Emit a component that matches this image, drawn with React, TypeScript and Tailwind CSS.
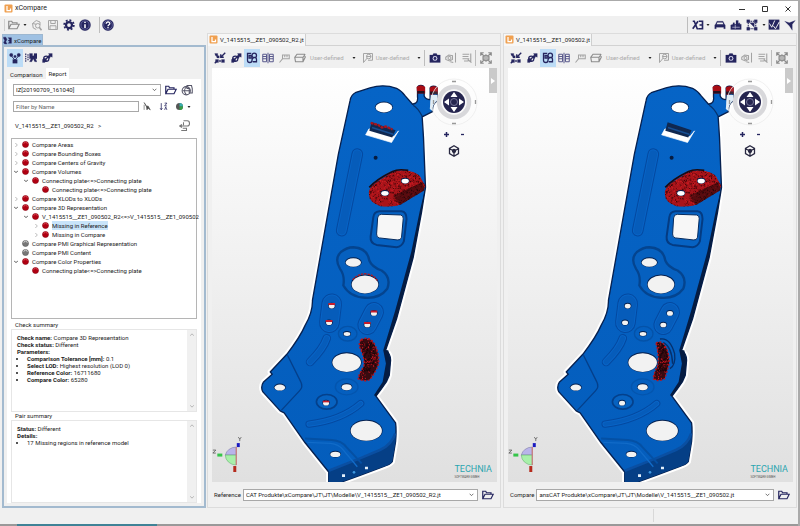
import React, { useId } from "react";

const NAVY = "#25255f";
const GREY = "#a3a3a3";

type IconProps = { name: string; color?: string; className?: string };

const glyphs: Record<string, React.ReactNode> = {
  folder: <path d="M1 13V3h4l1 2h6v2M1 13l3-6h11l-3 6z" fill="none" strokeWidth="1.6" />,
  boxLens: (
    <g fill="none" strokeWidth="1.3">
      <path d="M2 6l5-4 5 2v4M2 6l1 6 4 2M2 6l5 1" />
      <circle cx="9" cy="9" r="3" />
      <path d="M11 11l3 4" strokeWidth="2" />
    </g>
  ),
  save: <path d="M2 2h12v12H2zM5 2v4h6V2M4 14V9h8v5" fill="none" strokeWidth="1.3" />,
  gear: (
    <g fill="none">
      <circle cx="8" cy="8" r="4" strokeWidth="3" />
      <circle cx="8" cy="8" r="6.4" strokeWidth="2.4" strokeDasharray="2.5 2.5" />
    </g>
  ),
  info: (
    <g>
      <circle cx="8" cy="8" r="7.500" />
      <circle cx="8" cy="8" r="5.4" fill="none" stroke="#7d7db5" strokeWidth=".8" />
      <path d="M8 7v5M8 3.6v1.6" stroke="#fff" strokeWidth="2" />
    </g>
  ),
  help: (
    <g>
      <circle cx="8" cy="8" r="7.500" />
      <circle cx="8" cy="8" r="5.8" fill="none" stroke="#7d7db5" strokeWidth=".8" />
      <path d="M5.6 6.4C5.6 3 10.6 3.400 10.400 6.200 10.300 7.600 8 7.800 8 9.600M8 10.800v1.600" stroke="#fff" strokeWidth="1.7" fill="none" />
    </g>
  ),
  compare: <path d="M1 2h4l2 4-2 4 2 4H3L1 12l2-4-2-4zM9 3h6v10H9l3-3-3-2 3-2z" strokeWidth=".6" />,
  xs: (
    <g fill="none" strokeWidth="2.200">
      <path d="M1 3h2l4 10h2M8 3L1 13" />
      <path d="M9 3h5v10H9M14 8h-4" />
    </g>
  ),
  car: (
    <g>
      <path d="M2 7l2-4h8l2 4 1 1v5h-2v-2H3v2H1V8z" />
      <path d="M4.500 4.500h7l1 2.500h-9z" fill="#f0f0f0" stroke="none" />
    </g>
  ),
  factory: (
    <g>
      <path d="M1 14V8l3-1v-2h2v2h2V2h3v4l2-1v2h2v7z" />
      <path d="M3 11h10M7 8v5" stroke="#c9c9e0" strokeWidth=".9" />
    </g>
  ),
  frame: (
    <g>
      <path d="M3 3h10v10H3z" fill="none" strokeWidth="1.400" strokeDasharray="2 1" />
      <path d="M1 1h4v4H1zM11 1h4v4h-4zM1 11h4v4H1zM11 11h4v4h-4zM5 5l6 6V5z" />
    </g>
  ),
  checks: (
    <g>
      <path d="M1 1h14v13H1z" />
      <path d="M2 6l3 5 4-9M7 9l3 4 5-9" stroke="#f0f0f0" strokeWidth="1.300" fill="none" />
    </g>
  ),
  bird: <path d="M1 3l6 2 8-3-4 5v8L7 9z" />,
  nodes: (
    <g>
      <circle cx="3" cy="4" r="2.300" />
      <circle cx="13" cy="4" r="2.300" />
      <circle cx="8" cy="6" r="1.600" />
      <path d="M3 5l5 6 5-6" fill="none" strokeWidth="1.200" />
      <path d="M5 10h6v5H5z" />
    </g>
  ),
  bars: (
    <g>
      <path d="M1 2v11M4 3v8" fill="none" strokeWidth="1.500" strokeDasharray="2 1" />
      <path d="M6 2h4v3h2V2h4v7h-2l2 4h-3l-2-4-2 4H6l2-4H6z" />
    </g>
  ),
  link: (
    <g>
      <path d="M10 2h5v5l-2-1-2 3-2-2 2-3zM2 14v-4l3-2 3 3-3 3z" />
      <circle cx="7" cy="9" r="3.500" fill="none" strokeWidth="1.500" />
      <path d="M6 10l5-5" strokeWidth="1.800" />
    </g>
  ),
  collapse: (
    <g>
      <path d="M15 1L9 7M9 3v4h4M1 15l3-3" fill="none" strokeWidth="1.800" />
      <path d="M1 2h4v3H2zM3 5h4v3H4zM2 10h4v4H2zM10 10h4v4h-4zM7 11h2v2H7z" />
    </g>
  ),
  sync: (
    <g fill="none" strokeWidth="1.700">
      <path d="M7 2H2v9c0 4 6 4 6 0 0-5 6-5 6-1v3H9" />
      <circle cx="11" cy="4.500" r="3" />
      <path d="M4 5h3v3H4z" />
    </g>
  ),
  split: (
    <g fill="none" strokeWidth="1.300">
      <path d="M1 3h5v10H1zM10 3h5v10h-5zM8 1v14M1 6h5M1 9h5M10 6h5M10 9h5" />
    </g>
  ),
  measure: <path d="M2 14l4-5V4h9v5H6M9 4v3M12 4v3" fill="none" strokeWidth="1.400" />,
  layers: <path d="M1 7l3-4h10l1 4-3 6H2zM1 7h11v6M12 7l3-4" fill="none" strokeWidth="1.500" stroke="#8c8c8c" />,
  view: (
    <g fill="none" strokeWidth="1.300">
      <path d="M2 2h12v9H8M2 2v12l5-6" />
      <circle cx="9" cy="6" r="3" />
      <path d="M6 6h6" />
    </g>
  ),
  camera: (
    <g>
      <path d="M1 4h4l1-2h4l1 2h4v10H1z" />
      <circle cx="8" cy="8.500" r="3.200" fill="#d8d8ef" stroke="none" />
      <circle cx="8" cy="8.500" r="1.700" />
    </g>
  ),
  sound: (
    <g fill="none" strokeWidth="1.400">
      <path d="M1 7l4-3 5 1v5l-4 2-5-2zM14 1v13M7 13l4 1" />
      <circle cx="6" cy="8" r="2" />
    </g>
  ),
  list: <path d="M2 3h9M2 6h8M2 9h9M4 12h6M13 2v12M9 10l5 4" fill="none" strokeWidth="1.500" />,
  expand: (
    <g fill="none" strokeWidth="1.500">
      <path d="M1 5V1h4M11 1h4v4M15 11v4h-4M5 15H1v-4M1 1l4 4M15 1l-4 4M15 15l-4-4M1 15l4-4" />
      <path d="M8 4l4 2v4l-4 2-4-2V6z" fill="#b5b5b5" />
    </g>
  ),
  globe: (
    <g fill="none" strokeWidth="1.400">
      <circle cx="7" cy="9" r="5.500" />
      <path d="M2 9h10M7 4c-3 3-3 7 0 10M8 2h6l1 4v6h-4V6H8z" />
    </g>
  ),
  pick: <path d="M2 1l4 6 1 7 2-3 4 3-4-7-3 1zM2 5v9" strokeWidth="1" />,
  sort: <path d="M4 2v11M2 11l2 3 2-3M10 2h4l-4 5h4M10 14l2-5 2 5" fill="none" strokeWidth="1.400" />,
  exportDoc: <path d="M6 1h5c4 0 4 7 0 7H1M6 3v4M4 6L1 8l3 2M5 11h5v3H3" fill="none" strokeWidth="1.400" />,
};

function Icon({ name, color = NAVY, className = "size-3" }: IconProps) {
  return (
    <svg viewBox="0 0 16 16" className={`shrink-0 ${className}`} fill={color} stroke={color} strokeWidth=".3" aria-hidden="true">
      {glyphs[name]}
    </svg>
  );
}

function IconButton({ name, label, color, active }: { name: string; label: string; color?: string; active?: boolean }) {
  return (
    <button type="button" aria-label={label} className={`flex h-[18px] w-4 shrink-0 items-center justify-center ${active ? "bg-[#bcdcf6]" : ""}`}>
      <Icon name={name} color={color} />
    </button>
  );
}

function Caret() {
  return (
    <svg viewBox="0 0 6 4" className="h-[2px] w-1 shrink-0" aria-hidden="true">
      <path d="M0 0h6L3 4z" fill="#222" />
    </svg>
  );
}

function Logo({ className = "size-[9px]" }: { className?: string }) {
  return (
    <svg viewBox="0 0 18 18" className={`shrink-0 ${className}`} aria-hidden="true">
      <rect x="1" y="1" width="16" height="16" rx="2" fill="#f0a050" />
      <path d="M6 4v9h7V9" fill="none" stroke="#fff" strokeWidth="2.500" />
    </svg>
  );
}

function Combo({ id, label, value }: { id: string; label: string; value: string }) {
  return (
    <div className="relative min-w-0 flex-1">
      <select id={id} aria-label={label} defaultValue={value} className="block h-3 w-full appearance-none border border-[#a8a8a8] bg-white pr-3 pl-[2px] text-[6px] leading-[10px] text-[#222]">
        <option>{value}</option>
      </select>
      <svg viewBox="0 0 8 6" className="pointer-events-none absolute top-1 right-1 h-1 w-[5px]" aria-hidden="true">
        <path d="M1 1l3 3 3-3" fill="none" stroke="#555" strokeWidth="1.300" />
      </svg>
    </div>
  );
}

type Row = { text: string; depth: 0 | 1 | 2; state?: "open" | "closed"; idle?: boolean; selected?: boolean };

const rows: Row[] = [
  { text: "Compare Areas", depth: 0, state: "closed" },
  { text: "Compare Bounding Boxes", depth: 0, state: "closed" },
  { text: "Compare Centers of Gravity", depth: 0, state: "closed" },
  { text: "Compare Volumes", depth: 0, state: "open" },
  { text: "Connecting plate<=>Connecting plate", depth: 1, state: "open" },
  { text: "Connecting plate<=>Connecting plate", depth: 2 },
  { text: "Compare XLODs to XLODs", depth: 0, state: "closed" },
  { text: "Compare 3D Representation", depth: 0, state: "open" },
  { text: "V_1415515__ZE1_090502_R2<=>V_1415515__ZE1_090502", depth: 1, state: "open" },
  { text: "Missing in Reference", depth: 2, state: "closed", selected: true },
  { text: "Missing in Compare", depth: 2, state: "closed" },
  { text: "Compare PMI Graphical Representation", depth: 0, idle: true },
  { text: "Compare PMI Content", depth: 0, idle: true },
  { text: "Compare Color Properties", depth: 0, state: "open" },
  { text: "Connecting plate<=>Connecting plate", depth: 1 },
];

const indent = ["pl-[2px]", "pl-[12px]", "pl-[22px]"];

function TreeRow({ row }: { row: Row }) {
  return (
    <li role="treeitem" aria-selected={!!row.selected} className={`flex h-[9px] items-center ${indent[row.depth]}`}>
      <svg viewBox="0 0 6 6" className="size-1 shrink-0" fill="none" stroke={row.state === "open" ? "#444" : "#999"} aria-hidden="true">
        {row.state === "open" && <path d="M0 1l3 3 3-3" strokeWidth="1.400" />}
        {row.state === "closed" && <path d="M2 0l3 3-3 3" />}
      </svg>
      <svg viewBox="0 0 12 12" className="ml-1 size-[7px] shrink-0" aria-hidden="true">
        <circle cx="6" cy="6" r="5.200" fill={row.idle ? "#777" : "#b00012"} stroke={row.idle ? "#555" : "#8a0010"} />
        <path d="M3 5a3 3 0 0 1 6 0" fill="none" stroke={row.idle ? "#eee" : "#de5560"} strokeWidth="1.200" />
      </svg>
      <span className={`ml-[3px] whitespace-nowrap ${row.selected ? "bg-[#c8e4fa]" : ""}`}>{row.text}</span>
    </li>
  );
}

function Summary({ title, children }: { title: string; children: React.ReactNode }) {
  return (
    <section className="flex h-[91px] shrink-0 flex-col">
      <h2 className="ml-1 h-2 text-[6px] leading-[8px]">{title}</h2>
      <div className="flex min-h-0 flex-1 justify-between border border-[#e6e6e6]">
        <div className="px-[5px] pt-1 text-[6px] leading-[7px]">{children}</div>
        <div className="flex w-[9px] flex-col items-center justify-between bg-[#f0f0f0] py-[3px]">
          <svg viewBox="0 0 6 4" className="h-[3px] w-1" aria-hidden="true"><path d="M0 4l3-3 3 3" fill="none" stroke="#999" /></svg>
          <svg viewBox="0 0 6 4" className="h-[3px] w-1" aria-hidden="true"><path d="M0 0l3 3 3-3" fill="none" stroke="#999" /></svg>
        </div>
      </div>
    </section>
  );
}

function ReportPanel() {
  return (
    <aside className="flex w-[204px] shrink-0 flex-col text-[6px]">
      <div className="flex h-3 items-end">
        <button type="button" className="flex h-[11px] items-center gap-[2px] border border-b-0 border-[#9db7d0] bg-[#9fc1e3] pr-px">
          <Icon name="compare" className="size-[9px]" />
          xCompare
        </button>
      </div>
      <div className="flex min-h-0 flex-1 flex-col border-2 border-[#a3bacf] bg-[#f0f0f0] px-[3px] pb-[3px]">
        <div className="flex h-[21px] items-center">
          <IconButton name="nodes" label="Structure" active />
          <IconButton name="bars" label="Pairs" />
          <IconButton name="link" label="Link" />
        </div>
        <div role="tablist" className="flex h-[11px] shrink-0 items-end">
          <button type="button" role="tab" aria-selected="false" className="h-[9px] px-[3px] leading-[9px]">Comparison</button>
          <button type="button" role="tab" aria-selected="true" className="h-[11px] bg-white px-[3px] leading-[10px]">Report</button>
        </div>
        <div className="flex min-h-0 flex-1 flex-col bg-white px-1">
          <div className="mt-[5px] flex h-3 items-center pl-[2px]">
            <div className="flex w-[148px]"><Combo id="report" label="Report" value="IZ[20190709_161040]" /></div>
            <div className="ml-[2px] flex h-3 items-center"><IconButton name="folder" label="Open report" /><IconButton name="globe" label="Publish report" color="#555568" /></div>
          </div>
          <div className="mt-[5px] flex h-[11px] items-center pl-[2px]">
            <input aria-label="Filter by Name" placeholder="Filter by Name" className="h-[11px] w-[126px] border border-[#a8a8a8] bg-white px-[2px] text-[6px] placeholder:text-[#666]" />
            <div className="flex h-[11px] items-center">
              <button type="button" aria-label="Pick" className="w-4 pl-1"><Icon name="pick" color="#444" className="size-[9px]" /></button>
              <button type="button" aria-label="Sort" className="w-4 pl-1"><Icon name="sort" className="size-[9px]" /></button>
              <button type="button" aria-label="Colours" className="w-4 pl-[5px]">
                <svg viewBox="0 0 8 8" className="size-[7px]"><circle cx="4" cy="4" r="4" fill="#555" /><path d="M4 4V0a4 4 0 0 1 4 4z" fill="#3ab0b0" /><path d="M4 4h4a4 4 0 0 1-4 4z" fill="#35a045" /></svg>
              </button>
              <Caret />
            </div>
          </div>
          <div className="mt-[6px] mb-[5px] flex h-[15px] items-center justify-between pr-1 pl-1">
            <span>V_1415515__ZE1_090502_R2 &nbsp; &gt;</span>
            <IconButton name="exportDoc" label="Export" color="#777" />
          </div>
          <ul role="tree" className="min-h-0 flex-1 border border-[#b5b5b5] pt-px">
            {rows.map((row, i) => <TreeRow key={i} row={row} />)}
          </ul>
          <div className="h-[2px] shrink-0" />
          <Summary title="Check summary">
            <p><b>Check name:</b> Compare 3D Representation</p>
            <p><b>Check status:</b> Different</p>
            <p><b>Parameters:</b></p>
            <ul className="list-disc pl-[10px]">
              <li><b>Comparison Tolerance [mm]:</b> 0.1</li>
              <li><b>Select LOD:</b> Highest resolution (LOD 0)</li>
              <li><b>Reference Color:</b> 16711680</li>
              <li><b>Compare Color:</b> 65280</li>
            </ul>
          </Summary>
          <Summary title="Pair summary">
            <p><b>Status:</b> Different</p>
            <p><b>Details:</b></p>
            <ul className="list-disc pl-[10px]">
              <li>17 Missing regions in reference model</li>
            </ul>
          </Summary>
        </div>
      </div>
    </aside>
  );
}

/* Random but repeatable flecks for the highlighted regions. */
function flecks(x: number, y: number, w: number, h: number, n: number, seed: number) {
  let s = seed;
  const next = () => {
    s = (s * 16807) % 2147483647;
    return s / 2147483647;
  };
  let d = "";
  for (let i = 0; i < n; i++) {
    d += `M${(x + next() * w).toFixed(1)} ${(y + next() * h).toFixed(1)}l${(next() * 8 - 4).toFixed(1)} ${(next() * 8 - 4).toFixed(1)}`;
  }
  return d;
}

const OUTLINE =
  "M300 90Q302 72 318 64L360 51Q400 38 440 52Q458 62 466 75L488 100L497 97Q505 92 503 78V50Q504 43 513 43T523 50V75Q528 86 541 86V52Q542 46 551 46T562 52V90Q546 100 548 122L517 138L521 200L527 350L515 425L490 560L455 690L440 745L407 840Q422 850 422 870L418 915Q412 935 395 955L378 978L437 1058Q440 1080 437 1115L427 1175Q420 1184 400 1190L330 1216L275 1236H236V1206L165 1118L102 1028L90 1022L38 965Q30 950 40 935L66 912L60 905L110 852Q150 800 165 765Q188 725 187 690L210 560L265 250Z";

const RED_PLATE = "M356 366Q358 350 375 337L425 305Q442 297 465 299Q495 300 510 316L527 345L521 360L452 402Q430 410 400 408Q356 400 356 366Z";
const ARC_REFERENCE = "M333 808Q358 796 372 818Q390 850 386 882Q376 908 360 928Q345 936 325 926Q324 915 342 888Q344 860 331 835Q324 820 333 808Z";
const ARC_COMPARE = "M330 818Q345 808 358 828Q372 852 369 882Q362 910 356 925Q340 936 322 926Q322 910 336 885Q340 860 330 818Z";

function Hole({ x, y, rx, ry, fill = "#f2f2f2" }: { x: number; y: number; rx: number; ry: number; fill?: string }) {
  return (
    <g>
      <ellipse cx={x} cy={y} rx={rx + 2} ry={ry + 2} fill="#041f4e" />
      <ellipse cx={x} cy={y + 1} rx={rx} ry={ry} fill={fill} />
    </g>
  );
}

function Groove({ d, w }: { d: string; w: number }) {
  return (
    <g fill="none" strokeLinecap="round" strokeLinejoin="round">
      <path d={d} stroke="#0449a0" strokeWidth={w} />
      <path d={d} stroke="#0864c6" strokeWidth={w - 6} />
      <path d={d} stroke="#065cba" strokeWidth={w - 12} />
    </g>
  );
}

function Part({ reference }: { reference: boolean }) {
  const id = useId();
  const arc = reference ? ARC_REFERENCE : ARC_COMPARE;
  return (
    <svg viewBox="212 67 285 415" className="absolute inset-0 h-full w-full" role="img" aria-label="Connecting plate">
      <defs>
        <clipPath id={`${id}p`}><path d={RED_PLATE} /></clipPath>
        <clipPath id={`${id}a`}><path d={arc} /></clipPath>
        <linearGradient id={`${id}b`} x1="0" y1="0" x2="0" y2="1">
          <stop offset="0" stopColor="#0664c6" />
          <stop offset="1" stopColor="#045dbc" />
        </linearGradient>
      </defs>
      <g transform="translate(250 70) scale(.33333)">
        <path d={OUTLINE} fill="#fff" stroke="#fff" strokeWidth="16" strokeLinejoin="round" />
        <path d={OUTLINE} fill={`url(#${id}b)`} stroke="#06204f" strokeWidth="4" strokeLinejoin="round" />
        <path d="M527 350L515 425L490 560L455 690L440 745L407 840L415 840L422 870L418 915Q412 935 395 955L378 978L372 975L398 935L408 880L400 840L436 720L484 545L510 420Z" fill="#051c42" />
        <path d="M236 1202L330 1165L390 1140Q425 1125 438 1095L437 1115L427 1175Q420 1184 400 1190L275 1236H236Z" fill="#053f86" />
        <path d="M236 1202L330 1165L390 1140Q425 1125 436 1090" fill="none" stroke="#0a4fa2" strokeWidth="8" />
        <path d="M500 48q12-10 26 0v20h-24zM540 50q12-8 24 0v18l-22 4z" fill="#a80c14" />
        <path d="M502 60h22v8h-22zM541 62h22v8h-22z" fill="#231020" />
        <path d="M543 72h20v16q-16 12-15 32l-8-6z" fill="#dcecf8" />
        <path d="M490 103q14 8 27 33" fill="none" stroke="#06346f" strokeWidth="4" />

        <Hole x={402} y={109} rx={25} ry={15} fill="#fff" />
        <path d="M357 174L432 197L446 180L425 215L347 192Z" fill="#fff" stroke="#fff" strokeWidth="2" />
        <path d="M365 154L437 178L427 200L358 180Z" fill="#102850" />
        <path d="M366 170L430 190" stroke="#174e92" strokeWidth="5" />
        {reference && <path d="M362 156l22 6 12 8 12-3 20 9" fill="none" stroke="#a8141c" strokeWidth="7" strokeDasharray="9 2" />}
        <circle cx="377" cy="261" r="6" fill="#071c40" />
        <Groove d="M322 250L275 480" w={35} />

        <g clipPath={`url(#${id}p)`}>
          <path d={RED_PLATE} fill="#a8141a" />
          <path d={flecks(350, 295, 180, 115, 480, 7)} stroke="#3a0608" strokeWidth="3" />
          <path d={flecks(350, 295, 180, 115, 260, 19)} stroke="#d41e24" strokeWidth="3" />
          <path d="M430 375L515 335L530 360L450 405Z" fill="#160508" opacity=".55" />
        </g>
        <path d="M358 350Q380 325 428 302Q445 294 475 299" fill="none" stroke="#1c0a12" strokeWidth="5" />
        <Hole x={405} y={367} rx={11} ry={7} fill="#fff" />
        <Hole x={466} y={330} rx={11} ry={7} fill="#fff" />

        <path d="M388 422H455Q470 424 470 445L462 512Q456 528 440 530L380 523Q360 518 362 498L370 440Q372 424 388 422Z" fill="#0662c2" stroke="#043b82" strokeWidth="6" />
        <path d="M394 431L452 433Q461 434 460 444L455 500Q453 510 442 508L388 502Q379 500 380 490L383 442Q384 431 394 431Z" fill="#f7f7f7" stroke="#05295c" strokeWidth="3" />

        <path d="M310 530Q352 532 358 570Q366 590 395 600Q425 620 412 655Q390 685 345 682Q300 680 280 645Q285 615 270 595Q252 565 272 545Q290 530 310 530Z" fill="#0660bf" stroke="#04448f" strokeWidth="7" />
        <Hole x={310} y={575} rx={23} ry={13} />
        <Hole x={345} y={641} rx={40} ry={27} />
        {reference && <path d="M308 628Q325 608 348 610T382 630" fill="none" stroke="#b51a22" strokeWidth="4" strokeDasharray="7 3" />}

        <Groove d="M245 700L238 757" w={62} />
        <Groove d="M372 725L352 764" w={60} />
        <Hole x={245} y={706} rx={9} ry={7} />
        <Hole x={237} y={756} rx={9} ry={7} />
        <Hole x={372} y={728} rx={9} ry={7} />
        <Hole x={352} y={763} rx={9} ry={7} />
        {reference && <path d="M235 701h20M227 752h20M362 723h20M342 758h20M217 993h20" stroke="#c51d2c" strokeWidth="6" />}
        <ellipse cx="293" cy="790" rx="28" ry="22" fill="none" stroke="#0452a8" strokeWidth="4" />
        <Hole x={291} y={790} rx={10} ry={6} />
        <Groove d="M230 804Q220 835 180 875" w={26} />

        <Hole x={290} y={876} rx={43} ry={28} />
        {!reference && <path d="M342 806Q372 800 386 850Q390 885 372 895M352 816Q378 830 380 880" fill="none" stroke="#05306c" strokeWidth="4" />}
        <g clipPath={`url(#${id}a)`}>
          <path d={arc} fill="#380b10" />
          <path d={flecks(320, 800, 72, 135, 200, 83)} stroke="#da1722" strokeWidth="3" />
          <path d={flecks(335, 815, 40, 90, 90, 29)} stroke="#180408" strokeWidth="4" />
        </g>
        <path d={arc} fill="none" stroke="#b8141e" strokeWidth="4" strokeDasharray="6 5" />

        <ellipse cx="290" cy="950" rx="34" ry="24" fill="none" stroke="#0455ae" strokeWidth="4" />
        <Hole x={290} y={950} rx={15} ry={9} />
        <ellipse cx="230" cy="995" rx="31" ry="22" fill="#0762c0" stroke="#04408b" strokeWidth="5" />
        <Hole x={228} y={998} rx={9} ry={7} />
        {reference && <path d="M218 994h20" stroke="#c51d2c" strokeWidth="5" />}
        <Groove d="M177 1062Q275 1050 332 1000" w={22} />
        <Hole x={349} y={1081} rx={47} ry={30} />
        <path d="M112 855L152 935Q160 950 148 962L94 1020" fill="none" stroke="#043f8a" strokeWidth="4" />
        <Hole x={89} y={951} rx={16} ry={9} />
        <path d="M165 1105L245 1110Q275 1112 290 1132L335 1180" fill="none" stroke="#0450a4" strokeWidth="6" />
        <path d="M172 1117L242 1120Q265 1122 280 1140L322 1190" fill="none" stroke="#116bc8" strokeWidth="4" />
        <Hole x={256} y={1152} rx={15} ry={8} />
        <path d="M276 1213h9v8h-9zM345 1190h9v8h-9z" fill="#e4f0fb" />
        <circle cx="312" cy="1207" r="4" fill="#3f98e0" />
      </g>
      <g strokeWidth="1.300">
        <path d="M236 455V447A11 10 0 0 0 225 455z" fill="#b9b4ea" stroke="#76739a" strokeWidth=".5" />
        <path d="M236 455V465A11 10 0 0 1 225 455z" fill="#a8f0aa" stroke="#55a862" strokeWidth=".5" />
        <path d="M236 447v18" stroke="#c98080" />
        <path d="M222 455h-5" stroke="#35c54a" strokeWidth="3" />
        <path d="M238 443v4" stroke="#1a1ac0" strokeWidth="3" />
        <path d="M234.500 466v6" stroke="#b52a1c" strokeWidth="3" />
        <path d="M238 437l1.500 2 1.500-2M239.500 439v2M212.500 450h3l-3 3h3" fill="none" stroke="#444" strokeWidth=".7" />
      </g>
    </svg>
  );
}

function Navigator() {
  return (
    <div className="absolute top-2 right-[18px] w-[50px]">
      <svg viewBox="0 0 50 50" className="size-[50px]" role="img" aria-label="Rotate view">
        <circle cx="25" cy="26" r="23" fill="#fff" fillOpacity=".1" stroke="#ececec" strokeOpacity=".8" />
        <circle cx="25" cy="26" r="16" fill="#fafafa" />
        <circle cx="25" cy="26" r="15" fill="none" stroke="#d8d8db" strokeWidth="4.500" />
        <circle cx="25" cy="26" r="11" fill="#25254f" />
        <path d="M25 16l3.500 5h-7zM25 36l3.500-5h-7zM15 26l5-3.500v7zM35 26l-5-3.500v7z" fill="#fff" />
        <circle cx="25" cy="26" r="3.500" fill="none" stroke="#77779a" />
        <path d="M23 5.500h4M23 47.500h4M4.500 24v4M46.500 24v4" stroke="#999" strokeWidth="1.300" />
      </svg>
      <div className="mt-[6px] flex justify-center gap-[11px]">
        <button type="button" aria-label="Zoom in" className="size-[5px]"><svg viewBox="0 0 5 5" className="size-[5px]"><path d="M0 2.500h5M2.500 0v5" stroke={NAVY} strokeWidth="1.500" /></svg></button>
        <button type="button" aria-label="Zoom out" className="size-[5px]"><svg viewBox="0 0 5 5" className="size-[5px]"><path d="M1 2.500h3" stroke={NAVY} strokeWidth="1.300" /></svg></button>
      </div>
      <button type="button" aria-label="Home view" className="mx-auto mt-2 block size-3">
        <svg viewBox="0 0 16 16" fill="none" stroke="#292942" strokeWidth="1.700" className="size-3">
          <path d="M8 1l6 3.500v7L8 15l-6-3.500v-7zM2 5l6 3 6-3M8 8v7" />
          <circle cx="8" cy="8" r="2" fill="#292942" />
        </svg>
      </button>
    </div>
  );
}

function Divider() {
  return <span className="h-4 w-px shrink-0 bg-[#bdbdbd]" />;
}

function Viewer({ file, label, path, reference }: { file: string; label: string; path: string; reference: boolean }) {
  const id = label.toLowerCase();
  return (
    <section className="flex min-w-0 flex-1 flex-col border border-[#dcdcdc] bg-[#f0f0f0] text-[6px]">
      <div className="flex h-3 shrink-0 items-center border-b border-[#d2d2d2]">
        <button type="button" className="flex h-3 items-center gap-[2px] border-r border-[#cfcfcf] bg-[#f7f7f7] pr-px pl-px">
          <Logo />
          {file}
        </button>
      </div>
      <div className="flex h-[22px] shrink-0 items-center pt-px pr-[6px] pl-1">
        <IconButton name="collapse" label="Collapse" />
        <IconButton name="link" label="Link" />
        <IconButton name="sync" label="Synchronise" active />
        <IconButton name="split" label="Split" color="#55558a" />
        <IconButton name="measure" label="Measure" color={GREY} />
        <IconButton name="layers" label="Layers" color={GREY} />
        <button type="button" className="ml-[2px] flex items-center gap-2 text-[#aaa]">User-defined <Caret /></button>
        <span className="ml-1 flex"><IconButton name="view" label="View" color={GREY} /></span>
        <button type="button" className="flex items-center gap-2 text-[#aaa]">User-defined <Caret /></button>
        <span className="ml-auto flex items-center">
          <Divider />
          <span className="w-[2px]" />
          <IconButton name="camera" label="Snapshot" />
          <IconButton name="sound" label="Markup" color={GREY} />
          <IconButton name="list" label="List" color={GREY} />
          <Divider />
          <span className="w-[2px]" />
          <IconButton name="expand" label="Fit all" color="#8a8a8a" />
        </span>
      </div>
      <div className="relative mr-[3px] ml-1 min-h-0 flex-1 overflow-hidden bg-linear-to-b from-white via-[#f0f0f0] to-[#e0e0e0]">
        <Part reference={reference} />
        <Navigator />
        <button type="button" aria-label="Show side bar" className="absolute top-0 right-0 flex h-[25px] w-2 items-center justify-center bg-[#cacaca]">
          <svg viewBox="0 0 4 6" className="h-[6px] w-1"><path d="M0 0l4 3-4 3z" fill="#fff" /></svg>
        </button>
        <div className="absolute right-[5px] bottom-[3px] text-[9px] leading-[11px] text-[#2ba5b0]">
          TECHNIA
          <div className="text-[3px] leading-[4px] text-[#555]">SOFTWARE GMBH</div>
        </div>
      </div>
      <div className="flex h-[25px] shrink-0 items-center gap-[2px] pr-1 pl-[6px]">
        <label htmlFor={id}>{label}</label>
        <Combo id={id} label={label} value={path} />
        <IconButton name="folder" label={`Open ${id} file`} />
      </div>
    </section>
  );
}

export default function App() {
  return (
    <div className="flex h-screen min-h-[480px] w-full flex-col overflow-hidden border-t border-r-2 border-[#aaa] bg-[#f0f0f0] font-[Roboto,'Liberation_Sans',sans-serif] text-[6px] leading-[9px] text-[#1c1c1c]">
      <header className="flex h-[15px] shrink-0 items-center bg-white pr-1 pl-1">
        <Logo />
        <h1 className="ml-[2px] text-[7px]">xCompare</h1>
        <div className="ml-auto flex items-center gap-[15px]">
          <button type="button" aria-label="Minimise"><svg viewBox="0 0 8 8" className="size-2"><path d="M1 4.500h6" stroke="#333" /></svg></button>
          <button type="button" aria-label="Maximise"><svg viewBox="0 0 8 8" className="size-2"><path d="M1.500 1.500h5v5h-5z" fill="none" stroke="#333" /></svg></button>
          <button type="button" aria-label="Close" className="mr-[2px]"><svg viewBox="0 0 8 8" className="size-2"><path d="M1.500 1.500l5 5M6.500 1.500l-5 5" stroke="#333" /></svg></button>
        </div>
      </header>
      <div className="flex h-[17px] shrink-0 items-center">
        <span className="ml-1 h-3 w-px bg-[#d0d0d0]" />
        <span className="ml-px flex items-center gap-px"><IconButton name="folder" label="Open" color="#8a8a8a" /><Caret /></span>
        <span className="ml-[2px] flex items-center">
          <IconButton name="boxLens" label="Inspect" color={GREY} />
          <IconButton name="save" label="Save" color={GREY} />
          <IconButton name="gear" label="Settings" />
          <IconButton name="info" label="About" />
        </span>
        <span className="ml-[6px] flex items-center"><Divider /><IconButton name="help" label="Help" /></span>
        <span className="ml-auto flex items-center">
          <Divider />
          <span className="w-[2px]" />
          <IconButton name="xs" label="Compare" />
          <Caret />
          <span className="w-[2px]" />
          <IconButton name="car" label="Vehicle" />
          <IconButton name="factory" label="Plant" />
          <IconButton name="frame" label="Selection" />
          <span className="w-[2px]" />
          <Caret />
          <IconButton name="checks" label="Checks" />
          <IconButton name="bird" label="Launch" />
        </span>
      </div>
      <main className="flex min-h-0 flex-1 gap-px pr-px pl-[2px]">
        <ReportPanel />
        <div className="flex min-w-0 flex-1 gap-[2px]">
          <Viewer reference file="V_1415515__ZE1_090502_R2.jt" label="Reference" path="CAT Produkte\xCompare\JT\JT\Modelle\V_1415515__ZE1_090502_R2.jt" />
          <Viewer reference={false} file="V_1415515__ZE1_090502.jt" label="Compare" path="ansCAT Produkte\xCompare\JT\JT\Modelle\V_1415515__ZE1_090502.jt" />
        </div>
      </main>
      <footer className="shrink-0">
        <div className="flex h-4 justify-end"><span className="mt-px mr-36 h-[13px] w-px bg-[#d8d8d8]" /></div>
        <div className="flex h-[2px] bg-[#999] pl-[17px]"><span className="w-[140px] bg-[#3f8296]" /></div>
      </footer>
    </div>
  );
}
